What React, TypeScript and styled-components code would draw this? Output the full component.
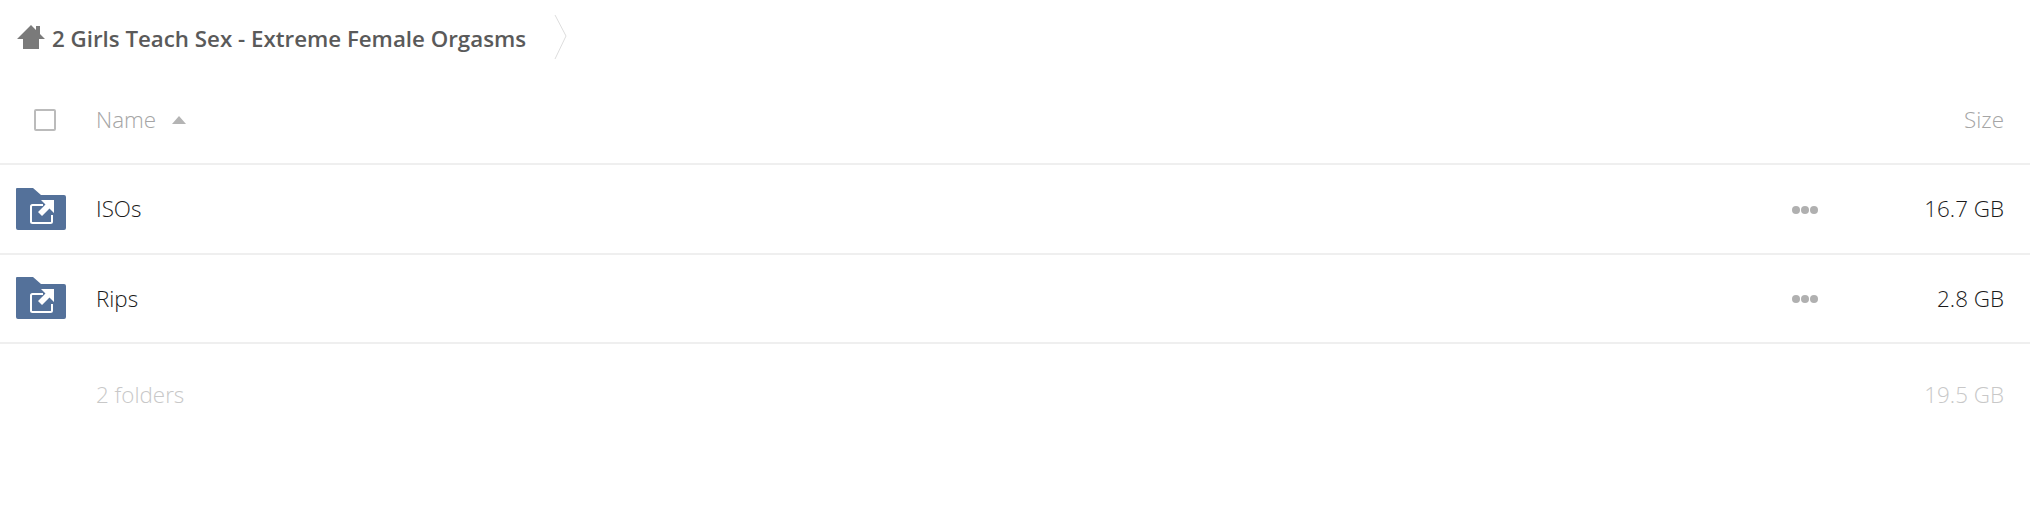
import React from "react";
import styled, { createGlobalStyle } from "styled-components";

const GlobalStyle = createGlobalStyle`
  html, body {
    margin: 0;
    padding: 0;
    background: #fff;
    font-family: "Open Sans", "Liberation Sans", sans-serif;
  }
`;

const Page = styled.div`
  width: 2030px;
  height: 517px;
  overflow: hidden;
`;

const Breadcrumb = styled.nav`
  display: flex;
  align-items: center;
  height: 76px;
  padding-left: 17px;
`;

const HomeLink = styled.a`
  display: flex;
  width: 28px;
  height: 24px;
  margin: -3px 7px 0 0;
`;

const Crumb = styled.span`
  font-size: 22.3px;
  font-weight: 600;
  color: #5a5a5a;
`;

const Chevron = styled.svg`
  width: 13px;
  height: 44px;
  margin: -2px 0 0 28px;
  flex: none;
`;

const Row = styled.div<{ $height: number; $bordered?: boolean }>`
  display: grid;
  grid-template-columns: 96px 1fr 60px 153px;
  align-items: center;
  height: ${(p) => p.$height}px;
  padding-right: 26px;
  box-sizing: border-box;
  border-bottom: ${(p) => (p.$bordered ? "2px solid #efefef" : "none")};
`;

const CheckCell = styled.div`
  display: flex;
  padding-left: 34px;
`;

const IconCell = styled.div`
  display: flex;
  padding-left: 16px;
`;

const Checkbox = styled.span`
  display: block;
  width: 22px;
  height: 22px;
  box-sizing: border-box;
  border: 2px solid #bbb;
  border-radius: 2px;
`;

const HeaderLabel = styled.span`
  display: flex;
  align-items: center;
  font-size: 22.4px;
  font-weight: 300;
  color: #a5a5a5;
`;

const SortArrow = styled.span`
  width: 0;
  height: 0;
  margin-left: 16px;
  border-left: 7px solid transparent;
  border-right: 7px solid transparent;
  border-bottom: 8px solid #b4b4b4;
`;

const FileName = styled.span`
  font-size: 22.4px;
  font-weight: 300;
  color: #1a1a1a;
`;

const Size = styled.span<{ $muted?: boolean; $head?: boolean }>`
  grid-column: 4;
  text-align: right;
  font-size: 22.4px;
  font-weight: 300;
  color: ${(p) => (p.$muted ? "#c8c8c8" : p.$head ? "#a5a5a5" : "#1a1a1a")};
`;

const Actions = styled.div`
  display: flex;
  gap: 1px;
  padding: 2px 0 0 1px;
`;

const Dot = styled.i`
  width: 8px;
  height: 8px;
  border-radius: 50%;
  background: #b0b0b0;
`;

const FooterText = styled.span`
  font-size: 22.4px;
  font-weight: 300;
  color: #c8c8c8;
`;

const HomeIcon = () => (
  <svg viewBox="0 0 28 24" width="28" height="24" fill="#7a7a7a">
    <path d="M0 14 L14 0 L19 5 V1 H23 V9 L28 14 H22 V24 H6 V14 Z" />
  </svg>
);

const SharedFolder = () => (
  <svg viewBox="0 0 50 42" width="50" height="42">
    <path
      d="M1 0 H17 L25 7 H48 a2 2 0 0 1 2 2 V40 a2 2 0 0 1 -2 2 H2 a2 2 0 0 1 -2 -2 V1 a1 1 0 0 1 1 -1 Z"
      fill="#54719a"
    />
    <path
      d="M27 17 H16.5 a1.5 1.5 0 0 0 -1.5 1.5 V33.5 a1.5 1.5 0 0 0 1.5 1.5 H34.5 a1.5 1.5 0 0 0 1.5 -1.5 V27"
      fill="none"
      stroke="#fff"
      strokeWidth="2"
    />
    <path d="M38 12 V25 L33.5 20.5 L26 28 L22 24 L29.5 16.5 L25 12 Z" fill="#fff" />
  </svg>
);

const rows = [
  { name: "ISOs", size: "16.7 GB" },
  { name: "Rips", size: "2.8 GB" },
];

export default function App() {
  return (
    <Page>
      <GlobalStyle />
      <Breadcrumb>
        <HomeLink>
          <HomeIcon />
        </HomeLink>
        <Crumb>2 Girls Teach Sex - Extreme Female Orgasms</Crumb>
        <Chevron viewBox="0 0 13 44">
          <path d="M1 0 L12 21 L1 44" fill="none" stroke="#ddd" strokeWidth="1" />
        </Chevron>
      </Breadcrumb>
      <Row $height={89} $bordered>
        <CheckCell>
          <Checkbox />
        </CheckCell>
        <HeaderLabel>
          Name
          <SortArrow />
        </HeaderLabel>
        <Size $head>Size</Size>
      </Row>
      {rows.map((r) => (
        <Row key={r.name} $height={89.5} $bordered>
          <IconCell>
            <SharedFolder />
          </IconCell>
          <FileName>{r.name}</FileName>
          <Actions>
            <Dot />
            <Dot />
            <Dot />
          </Actions>
          <Size>{r.size}</Size>
        </Row>
      ))}
      <Row $height={101}>
        <span />
        <FooterText>2 folders</FooterText>
        <Size $muted>19.5 GB</Size>
      </Row>
    </Page>
  );
}
